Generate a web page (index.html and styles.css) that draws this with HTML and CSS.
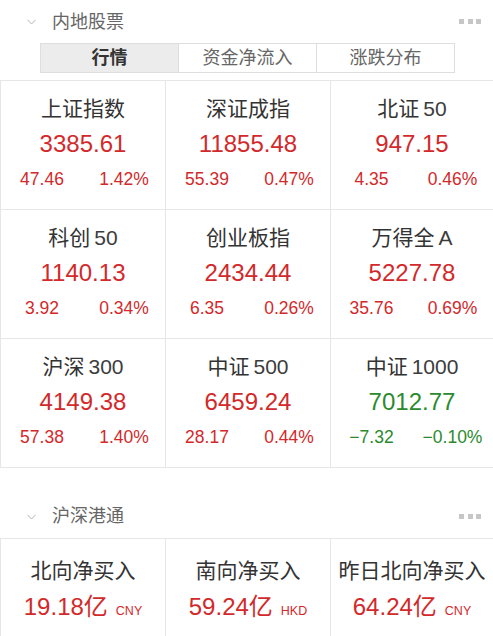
FILE: index.html
```html
<!DOCTYPE html>
<html lang="zh-CN">
<head>
<meta charset="utf-8">
<title>内地股票</title>
<link rel="stylesheet" href="styles.css">
</head>
<body>
<section class="sec">
  <div class="sec-head">
    <svg class="chev" viewBox="0 0 9 6" width="9" height="6"><polyline points="0.5,0.8 4.5,5 8.5,0.8" fill="none" stroke="#b3b3b3" stroke-width="1"/></svg>
    <span class="sec-title">内地股票</span>
    <span class="dots"><i></i><i></i><i></i></span>
  </div>
  <div class="tabs">
    <div class="tab active">行情</div>
    <div class="tab">资金净流入</div>
    <div class="tab">涨跌分布</div>
  </div>
  <div class="grid">
    <div class="cell"><div class="name">上证指数</div><div class="val up">3385.61</div><div class="chg up"><span>47.46</span><span>1.42%</span></div></div>
    <div class="cell"><div class="name">深证成指</div><div class="val up">11855.48</div><div class="chg up"><span>55.39</span><span>0.47%</span></div></div>
    <div class="cell"><div class="name">北证<span class="num">50</span></div><div class="val up">947.15</div><div class="chg up"><span>4.35</span><span>0.46%</span></div></div>
    <div class="cell"><div class="name">科创<span class="num">50</span></div><div class="val up">1140.13</div><div class="chg up"><span>3.92</span><span>0.34%</span></div></div>
    <div class="cell"><div class="name">创业板指</div><div class="val up">2434.44</div><div class="chg up"><span>6.35</span><span>0.26%</span></div></div>
    <div class="cell"><div class="name">万得全<span class="num">A</span></div><div class="val up">5227.78</div><div class="chg up"><span>35.76</span><span>0.69%</span></div></div>
    <div class="cell"><div class="name">沪深<span class="num">300</span></div><div class="val up">4149.38</div><div class="chg up"><span>57.38</span><span>1.40%</span></div></div>
    <div class="cell"><div class="name">中证<span class="num">500</span></div><div class="val up">6459.24</div><div class="chg up"><span>28.17</span><span>0.44%</span></div></div>
    <div class="cell"><div class="name">中证<span class="num">1000</span></div><div class="val down">7012.77</div><div class="chg down"><span>−7.32</span><span>−0.10%</span></div></div>
  </div>
</section>
<section class="sec">
  <div class="sec-head second">
    <svg class="chev" viewBox="0 0 9 6" width="9" height="6"><polyline points="0.5,0.8 4.5,5 8.5,0.8" fill="none" stroke="#b3b3b3" stroke-width="1"/></svg>
    <span class="sec-title">沪深港通</span>
    <span class="dots"><i></i><i></i><i></i></span>
  </div>
  <div class="grid">
    <div class="cell flow"><div class="name">北向净买入</div><div class="val up">19.18亿<small>CNY</small></div></div>
    <div class="cell flow"><div class="name">南向净买入</div><div class="val up">59.24亿<small>HKD</small></div></div>
    <div class="cell flow"><div class="name">昨日北向净买入</div><div class="val up">64.24亿<small>CNY</small></div></div>
  </div>
</section>
</body>
</html>
```
FILE: styles.css
```css
* { box-sizing: border-box; }
html, body {
  margin: 0;
  background: #fff;
}
body {
  width: 493px;
  overflow: hidden;
  font-family: "Liberation Sans", "Noto Sans CJK SC", sans-serif;
  color: #333;
}
.sec-head {
  display: flex;
  align-items: center;
  height: 43px;
  padding: 0 12px 0 27px;
}
.sec-head.second {
  margin-top: 26px;
  height: 44px;
}
.chev {
  display: block;
  margin-right: 16px;
  margin-top: 1px;
}
.sec-title {
  flex: 1;
  font-size: 18px;
  line-height: 24px;
  color: #666;
}
.dots {
  display: flex;
  gap: 3.5px;
}
.dots i {
  display: block;
  width: 5px;
  height: 5px;
  background: #c6c6c6;
}
.tabs {
  display: flex;
  height: 30px;
  margin: 0 38px 7px 40px;
  border: 1px solid #dedede;
}
.tab {
  flex: 1;
  text-align: center;
  font-size: 18px;
  line-height: 28px;
  color: #666;
}
.tab + .tab {
  border-left: 1px solid #dedede;
}
.tab.active {
  background: #ececec;
  color: #333;
  font-weight: bold;
}
.grid {
  display: grid;
  grid-template-columns: 164px 164px 1fr;
  gap: 1px;
  background: #e6e6e6;
  border-top: 1px solid #e6e6e6;
  border-bottom: 1px solid #e6e6e6;
  border-left: 1px solid #e6e6e6;
}
.cell {
  background: #fff;
  text-align: center;
  padding: 15px 0 19px;
}
.name {
  font-size: 21px;
  line-height: 26px;
  color: #333;
}
.name .num {
  margin-left: 4px;
  color: #3c3c3c;
}
.val {
  font-size: 24px;
  line-height: 32px;
  margin-top: 6px;
}
.chg {
  display: grid;
  grid-template-columns: 1fr 1fr;
  font-size: 17.5px;
  line-height: 22px;
  margin-top: 8px;
}
.up { color: #d2292b; }
.down { color: #2b8a2e; }
.cell.flow {
  padding: 19px 0 20px;
}
.cell.flow .val {
  margin-top: 7px;
}
.val small {
  font-size: 12.5px;
  margin-left: 8px;
}
```
